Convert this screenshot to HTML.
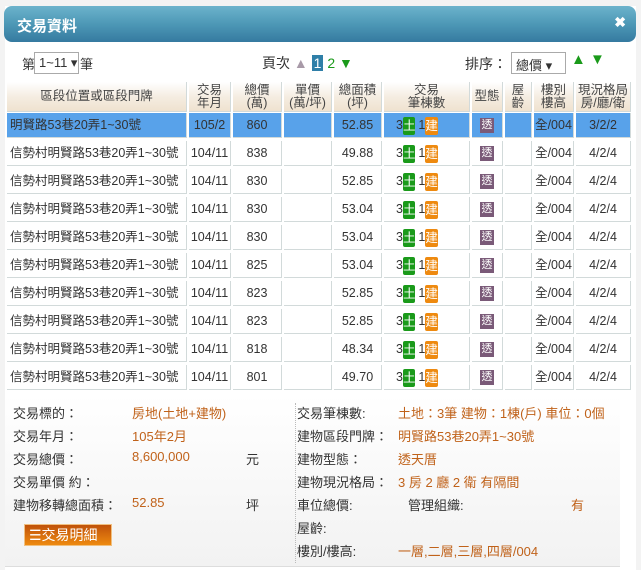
<!DOCTYPE html><html><head><meta charset="utf-8"><style>
*{margin:0;padding:0;box-sizing:border-box}
body{width:641px;height:570px;background:#f3f3f3;font-family:"Liberation Sans","Noto Sans CJK TC",sans-serif;font-size:13px;color:#333;position:relative;overflow:hidden}
.win{position:absolute;left:5px;top:6px;width:631px;height:564px;background:#fff}
.hd{position:absolute;left:4px;top:6px;width:632px;height:36px;border-radius:8px;background:linear-gradient(#6cb3cc,#4d98b6 50%,#357aa0);color:#fff;font-weight:bold;font-size:15px}
.hd span{position:absolute;left:13px;top:9px}
.hd b{position:absolute;right:10px;top:8px;font-size:14px}
.a{position:absolute;white-space:nowrap}
.sel{border:1px solid #aaa;background:#fff;height:22px;font-size:13px;padding:2px 4px}
.c{position:absolute;text-align:center;border-right:1px solid #d2dada;border-bottom:1px solid #d2dada;line-height:24px;font-size:12.5px;overflow:hidden;white-space:nowrap}
.h{background:linear-gradient(#fff,#f5ede2 50%,#efe2cf);line-height:13px;padding-top:2px;color:#444}
.b1{background:#58a2ea}
.g{display:inline-block;background:#1a9a1a;color:#fff;width:12px;height:18px;line-height:18px;border-radius:2px;vertical-align:middle}
.o{display:inline-block;background:#ee8a10;color:#fff;width:13px;height:18px;line-height:18px;border-radius:2px;vertical-align:middle}
.t{display:inline-block;background:#7a5a78;color:#fff;width:14px;height:15px;line-height:15px;font-size:11px;vertical-align:middle}
.bp{position:absolute;left:5px;top:395px;width:615px;height:172px;background:linear-gradient(#fff,#f2f2f2);border-bottom:1px solid #ddd}
.l{position:absolute;color:#333}.v{position:absolute;color:#c0621a}
</style></head><body>
<div class="win"></div>
<div class="hd"><span>交易資料</span><b>✖</b></div>
<div class="a" style="left:22px;top:54px">第</div>
<div class="a sel" style="left:34px;top:52px;width:45px">1~11 ▾</div>
<div class="a" style="left:80px;top:54px">筆</div>
<div class="a" style="left:262px;top:53px;font-size:14px">頁次 <span style="color:#a89aa8">▲</span> <span style="background:#2f7fa8;color:#fff;padding:0 2px">1</span> <span style="color:#1a9a1a">2</span> <span style="color:#1a9a1a">▼</span></div>
<div class="a" style="left:465px;top:54px;font-size:14px">排序：</div>
<div class="a sel" style="left:511px;top:52px;width:55px">總價 ▾</div>
<div class="a" style="left:571px;top:51px;color:#1a9a1a;font-size:15px">▲ ▼</div>
<div id="t"></div>
<div class="bp">
<div style="position:absolute;left:290px;top:8px;height:160px;border-left:1px dotted #bbb"></div>
</div>
<div class="l" style="left:13px;top:403px">交易標的：</div><div class="v" style="left:132px;top:403px">房地(土地+建物)</div>
<div class="l" style="left:13px;top:426px">交易年月：</div><div class="v" style="left:132px;top:426px">105年2月</div>
<div class="l" style="left:13px;top:449px">交易總價：</div><div class="v" style="left:132px;top:449px">8,600,000</div><div class="l" style="left:246px;top:449px">元</div>
<div class="l" style="left:13px;top:472px">交易單價 約：</div>
<div class="l" style="left:13px;top:495px">建物移轉總面積：</div><div class="v" style="left:132px;top:495px">52.85</div><div class="l" style="left:246px;top:495px">坪</div>
<div style="position:absolute;left:24px;top:524px;width:88px;height:22px;background:linear-gradient(#c0520a,#ee8a10);border:1px solid #f0c080;color:#fff;font-size:14px;line-height:20px;padding-left:4px">☰交易明細</div>
<div class="l" style="left:297px;top:403px">交易筆棟數:</div><div class="v" style="left:398px;top:403px">土地：3筆 建物：1棟(戶) 車位：0個</div>
<div class="l" style="left:297px;top:426px">建物區段門牌：</div><div class="v" style="left:398px;top:426px">明賢路53巷20弄1~30號</div>
<div class="l" style="left:297px;top:449px">建物型態：</div><div class="v" style="left:398px;top:449px">透天厝</div>
<div class="l" style="left:297px;top:472px">建物現況格局：</div><div class="v" style="left:398px;top:472px">3 房 2 廳 2 衛 有隔間</div>
<div class="l" style="left:297px;top:495px">車位總價:</div><div class="l" style="left:408px;top:495px">管理組織:</div><div class="v" style="left:571px;top:495px">有</div>
<div class="l" style="left:297px;top:518px">屋齡:</div>
<div class="l" style="left:297px;top:541px">樓別/樓高:</div><div class="v" style="left:398px;top:541px">一層,二層,三層,四層/004</div>
<script>
var X=[7,189,233,284,334,384,472,505,534,576,633];
var H=["區段位置或區段門牌","交易<br>年月","總價<br>(萬)","單價<br>(萬/坪)","總面積<br>(坪)","交易<br>筆棟數","型態","屋<br>齡","樓別<br>樓高","現況格局<br>房/廳/衛"];
var P=[860,838,830,830,830,825,823,823,818,801],A=["52.85","49.88","52.85","53.04","53.04","53.04","52.85","52.85","48.34","49.70"];
var s="";
function cell(i,y,h,cls,txt,al){s+='<div class="c '+cls+'" style="left:'+X[i]+'px;top:'+y+'px;width:'+(X[i+1]-X[i]-2)+'px;height:'+h+'px;'+(al||'')+'">'+txt+'</div>';}
for(var i=0;i<10;i++)cell(i,82,30,'h',H[i],i==0||i==6?'line-height:28px;padding-top:0':'');
for(var r=0;r<10;r++){var y=113+r*28,c=r==0?'b1':'';
var v=[r==0?'明賢路53巷20弄1~30號':'信勢村明賢路53巷20弄1~30號',r==0?'105/2':'104/11',P[r],'',A[r],'3<span class="g">土</span> 1<span class="o">建</span>','<span class="t">透</span>','','全/004',r==0?'3/2/2':'4/2/4'];
for(var i=0;i<10;i++)cell(i,y,25,c,v[i],i==0?'text-align:left;padding-left:3px':i==5?'text-align:left;padding-left:12px':'');}
document.getElementById('t').outerHTML=s;
</script>
</body></html>
